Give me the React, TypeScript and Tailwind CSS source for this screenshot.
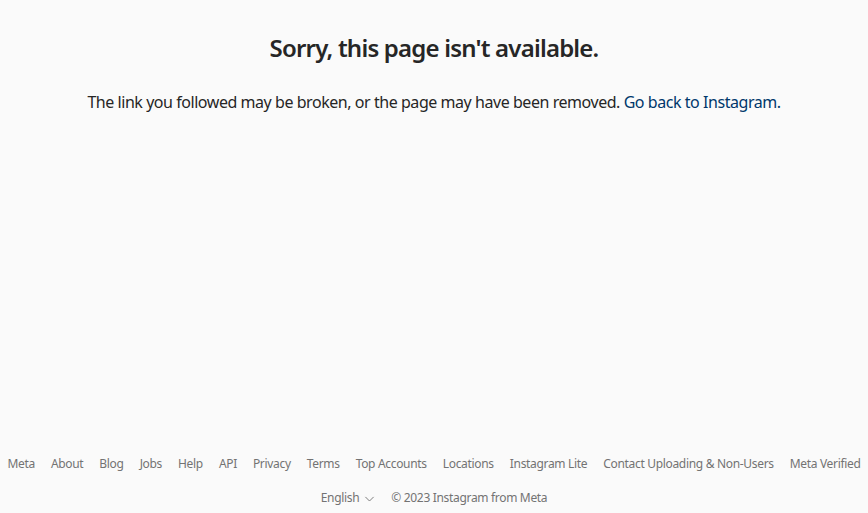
import React from "react";

const links = [
  "Meta",
  "About",
  "Blog",
  "Jobs",
  "Help",
  "API",
  "Privacy",
  "Terms",
  "Top Accounts",
  "Locations",
  "Instagram Lite",
  "Contact Uploading & Non-Users",
  "Meta Verified",
];

export default function App() {
  return (
    <div
      className="min-h-screen flex flex-col bg-[#fafafa] text-[#262626]"
      style={{ fontFamily: '"Noto Sans", "Open Sans", sans-serif' }}
    >
      <main className="flex-1 flex flex-col items-center pt-[31px]">
        <h2 className="text-[24px] leading-[34px] font-semibold tracking-[-0.8px]">Sorry, this page isn't available.</h2>
        <p className="mt-[27px] text-[16px] leading-[20px] tracking-[-0.45px]">
          The link you followed may be broken, or the page may have been removed.{" "}
          <a className="text-[#00376b]" href="#">Go back to Instagram.</a>
        </p>
      </main>
      <footer className="flex flex-col items-center pb-[7px] text-[12px] leading-[16px] text-[#737373] tracking-[-0.32px]">
        <div className="flex flex-nowrap justify-center whitespace-nowrap">
          {links.map((l) => (
            <span key={l} className="mx-[8px]">{l}</span>
          ))}
        </div>
        <div className="flex items-center mt-[18px]">
          <span className="flex items-center mr-[16px]">
            English
            <svg className="ml-[5px]" width="11" height="11" viewBox="0 0 24 24" fill="none" stroke="#737373" strokeWidth="2">
              <polyline points="21 8.5 12 17.5 3 8.5" />
            </svg>
          </span>
          <span>© 2023 Instagram from Meta</span>
        </div>
      </footer>
    </div>
  );
}
